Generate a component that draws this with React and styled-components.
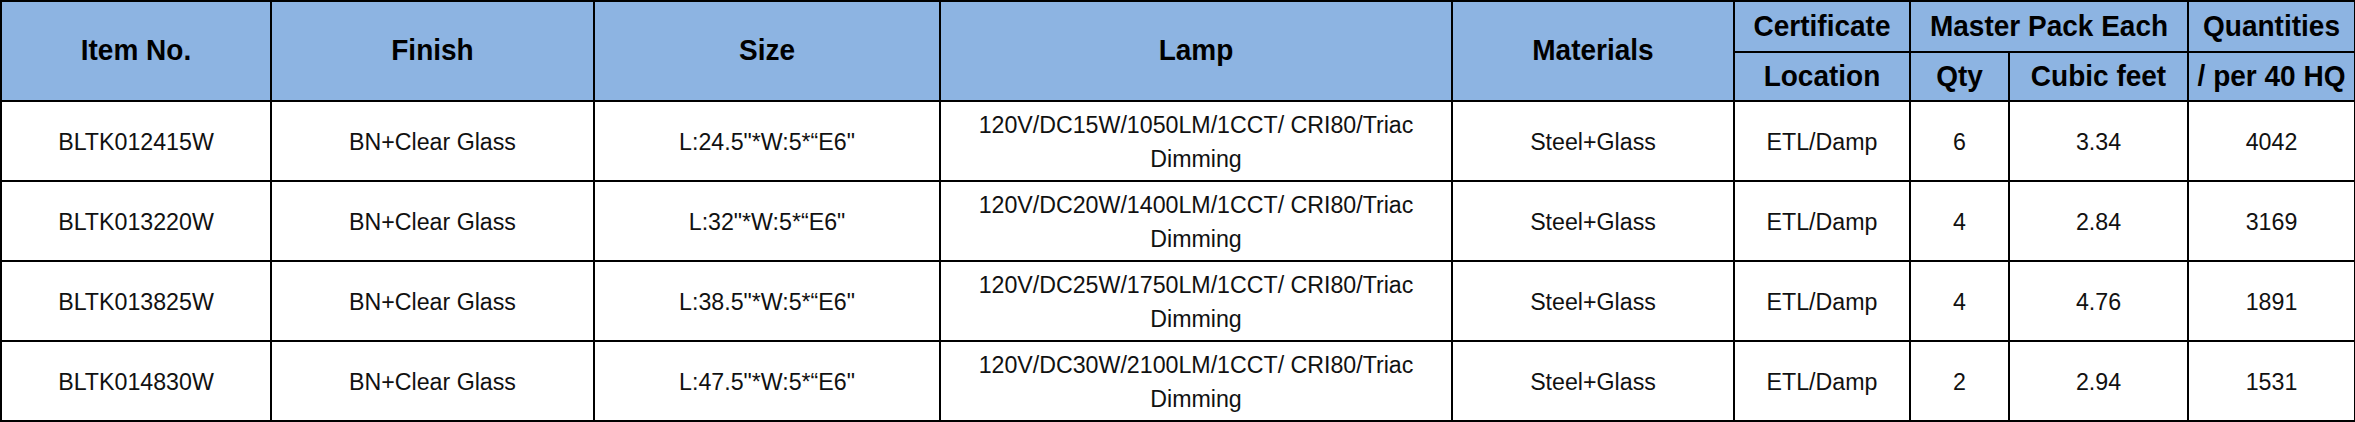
import React from "react";
import styled, { createGlobalStyle } from "styled-components";

const GlobalStyle = createGlobalStyle`
  html, body {
    margin: 0;
    padding: 0;
    background: #ffffff;
  }
`;

const Table = styled.table`
  width: 2354px;
  table-layout: fixed;
  border-collapse: collapse;
  font-family: "Liberation Sans", Arial, sans-serif;
  color: #000;
`;

const HeadCell = styled.th`
  background: #8db4e2;
  border: 2px solid #000;
  font-size: 28px;
  font-weight: bold;
  text-align: center;
  vertical-align: middle;
  padding: 0 4px;
  height: ${(p) => p.$h || 48}px;
  white-space: nowrap;
`;

const Cell = styled.td`
  border: 2px solid #000;
  font-size: 23.2px;
  line-height: 30.5px;
  text-align: center;
  vertical-align: middle;
  padding: 0 20px;
  height: 78px;
  color: #111;
`;

// the sheet text is drawn a little taller than it is wide
const Tall = styled.span`
  display: inline-block;
  transform: scaleY(${(p) => p.$y || 1.07});
`;

const widths = [270, 323, 346, 512, 282, 176, 99, 179, 167];

const rows = [
  ["BLTK012415W", "BN+Clear Glass", "L:24.5\"*W:5*\u201cE6\"", "120V/DC15W/1050LM/1CCT/ CRI80/Triac Dimming", "Steel+Glass", "ETL/Damp", "6", "3.34", "4042"],
  ["BLTK013220W", "BN+Clear Glass", "L:32\"*W:5*\u201cE6\"", "120V/DC20W/1400LM/1CCT/ CRI80/Triac Dimming", "Steel+Glass", "ETL/Damp", "4", "2.84", "3169"],
  ["BLTK013825W", "BN+Clear Glass", "L:38.5\"*W:5*\u201cE6\"", "120V/DC25W/1750LM/1CCT/ CRI80/Triac Dimming", "Steel+Glass", "ETL/Damp", "4", "4.76", "1891"],
  ["BLTK014830W", "BN+Clear Glass", "L:47.5\"*W:5*\u201cE6\"", "120V/DC30W/2100LM/1CCT/ CRI80/Triac Dimming", "Steel+Glass", "ETL/Damp", "2", "2.94", "1531"],
];

export default function App() {
  return (
    <>
      <GlobalStyle />
      <Table>
        <colgroup>
          {widths.map((w, i) => (
            <col key={i} style={{ width: w }} />
          ))}
        </colgroup>
        <thead>
          <tr>
            <HeadCell rowSpan={2}><Tall $y={1.05}>Item No.</Tall></HeadCell>
            <HeadCell rowSpan={2}><Tall $y={1.05}>Finish</Tall></HeadCell>
            <HeadCell rowSpan={2}><Tall $y={1.05}>Size</Tall></HeadCell>
            <HeadCell rowSpan={2}><Tall $y={1.05}>Lamp</Tall></HeadCell>
            <HeadCell rowSpan={2}><Tall $y={1.05}>Materials</Tall></HeadCell>
            <HeadCell $h={49}><Tall $y={1.05}>Certificate</Tall></HeadCell>
            <HeadCell $h={49} colSpan={2}><Tall $y={1.05}>Master Pack Each</Tall></HeadCell>
            <HeadCell $h={49}><Tall $y={1.05}>Quantities</Tall></HeadCell>
          </tr>
          <tr>
            <HeadCell $h={47}><Tall $y={1.05}>Location</Tall></HeadCell>
            <HeadCell $h={47}><Tall $y={1.05}>Qty</Tall></HeadCell>
            <HeadCell $h={47}><Tall $y={1.05}>Cubic feet</Tall></HeadCell>
            <HeadCell $h={47}><Tall $y={1.05}>/ per 40 HQ</Tall></HeadCell>
          </tr>
        </thead>
        <tbody>
          {rows.map((r) => (
            <tr key={r[0]}>
              {r.map((v, i) => (
                <Cell key={i}>
                  <Tall>{v}</Tall>
                </Cell>
              ))}
            </tr>
          ))}
        </tbody>
      </Table>
    </>
  );
}
